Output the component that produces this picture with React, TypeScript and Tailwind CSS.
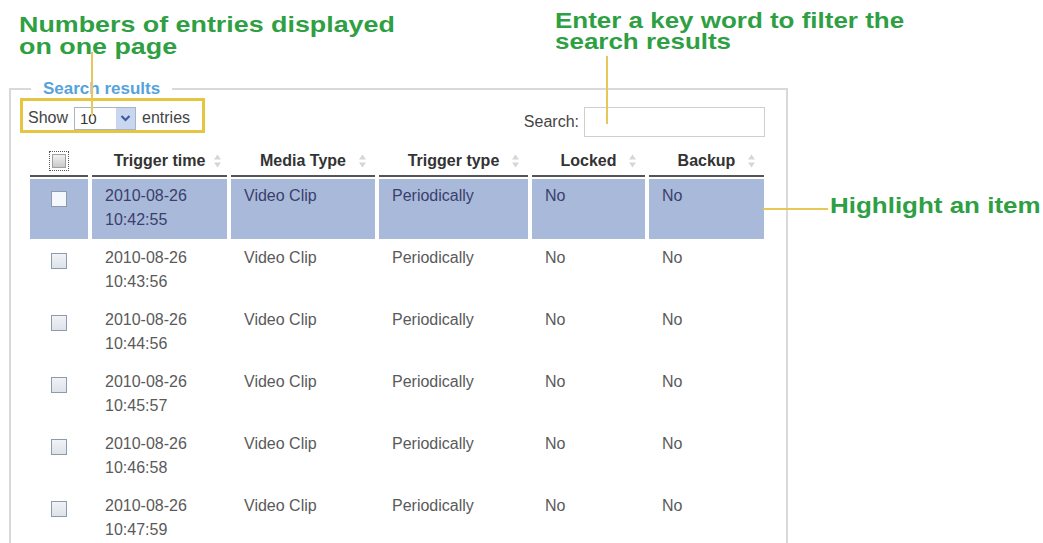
import React from "react";

const rows = [
  ["2010-08-26", "10:42:55"],
  ["2010-08-26", "10:43:56"],
  ["2010-08-26", "10:44:56"],
  ["2010-08-26", "10:45:57"],
  ["2010-08-26", "10:46:58"],
  ["2010-08-26", "10:47:59"],
];

function SortIcon({ right }: { right: string }) {
  return (
    <svg
      className={`absolute top-1/2 -translate-y-1/2 ${right}`}
      width="9"
      height="15"
      viewBox="0 0 9 15"
    >
      <path d="M4.5 1 L8 6 H1 Z" fill="#d6d6d6" />
      <path d="M4.5 14 L8 9 H1 Z" fill="#d6d6d6" />
    </svg>
  );
}

function Check({ light }: { light?: boolean }) {
  return (
    <div
      className={`w-[16px] h-[16px] border border-[#8d9aae] ${
        light ? "bg-[#f4f7fb]" : "bg-gradient-to-b from-[#f0f3f7] to-[#dde3ea]"
      }`}
    />
  );
}

const headers: { label: string; right: string }[] = [
  { label: "Trigger time", right: "right-[5px]" },
  { label: "Media Type", right: "right-[8px]" },
  { label: "Trigger type", right: "right-[8px]" },
  { label: "Locked", right: "right-[8px]" },
  { label: "Backup", right: "right-[8px]" },
];

export default function App() {
  return (
    <div className="relative w-[1043px] h-[543px] overflow-hidden bg-white font-['Liberation_Sans',Arial,sans-serif]">
      {/* Annotation headings */}
      <div className="flex items-start">
        <div className="w-[555px] pl-[19px] mt-[14px]">
          <div className="origin-left scale-x-[1.22] whitespace-nowrap font-bold text-[22px] leading-[22px] text-[#2ea043]">
            Numbers of entries displayed
            <br />
            on one page
          </div>
        </div>
        <div className="mt-[10px]">
          <div className="origin-left scale-x-[1.18] whitespace-nowrap font-bold text-[22px] leading-[21px] text-[#2ea043]">
            Enter a key word to filter the
            <br />
            search results
          </div>
        </div>
      </div>

      <div className="flex items-start mt-[21px]">
        <fieldset className="ml-[9px] w-[779px] h-[520px] border-2 border-[#d9d9d9] p-0">
          <legend className="ml-[20px] px-[12px] text-[17px] leading-[20px] font-bold text-[#56a3dc]">
            Search results
          </legend>

          {/* Controls row */}
          <div className="flex items-start justify-between mt-[-1px] pl-[9px] pr-[21px]">
            <div className="flex items-center w-[185px] h-[35px] border-[3px] border-[#e6c540] pl-[5px] pt-[5px] text-[16px] text-[#444]">
              <span>Show</span>
              <div className="ml-[6px] flex items-stretch w-[62px] h-[23px] border border-[#a9b4c4] bg-white">
                <span className="flex-1 pl-[5px] text-[15px] leading-[21px] text-[#333]">
                  10
                </span>
                <span className="w-[19px] flex items-center justify-center bg-[#c9d6f0]">
                  <svg width="11" height="8" viewBox="0 0 11 8">
                    <path
                      d="M1.5 2 L5.5 6 L9.5 2"
                      fill="none"
                      stroke="#3b5ba5"
                      strokeWidth="2.2"
                    />
                  </svg>
                </span>
              </div>
              <span className="ml-[6px]">entries</span>
            </div>
            <div className="flex items-center mt-[9px] text-[16px] text-[#444]">
              <span>Search:</span>
              <div className="ml-[5px] w-[181px] h-[30px] border border-[#cfcfcf] bg-white" />
            </div>
          </div>

          {/* Table */}
          <div className="ml-[19px] mt-[9px] grid grid-cols-[58px_135px_144px_149px_113px_115px] gap-x-[4px] gap-y-[2px]">
            {/* header */}
            <div className="h-[31px] border-b-2 border-[#555] flex items-center justify-center">
              <div className="w-[20px] h-[20px] border border-dotted border-[#555] p-[2px]">
                <div className="w-full h-full border border-[#a0a0a0] bg-gradient-to-b from-[#f2f2f2] to-[#c9c9c9]" />
              </div>
            </div>
            {headers.map((h) => (
              <div
                key={h.label}
                className="relative h-[31px] border-b-2 border-[#555] flex items-center justify-center font-bold text-[16px] text-[#333]"
              >
                {h.label}
                <SortIcon right={h.right} />
              </div>
            ))}

            {rows.map((r, i) => {
              const hi = i === 0;
              const cell = `h-[60px] pl-[13px] pt-[5px] text-[16px] leading-[24px] ${
                hi ? "bg-[#a9b9da] text-[#3a3f6c]" : "text-[#5a5a5a]"
              }`;
              return (
                <React.Fragment key={r[1]}>
                  <div
                    className={`h-[60px] flex justify-center pt-[12px] ${
                      hi ? "bg-[#a9b9da]" : ""
                    }`}
                  >
                    <Check light={hi} />
                  </div>
                  <div className={cell}>
                    {r[0]}
                    <br />
                    {r[1]}
                  </div>
                  <div className={cell}>Video Clip</div>
                  <div className={cell}>Periodically</div>
                  <div className={cell}>No</div>
                  <div className={cell}>No</div>
                </React.Fragment>
              );
            })}
          </div>
        </fieldset>

        <div className="ml-[42px] mt-[116px]">
          <div className="origin-left scale-x-[1.18] whitespace-nowrap font-bold text-[22px] leading-[22px] text-[#2ea043]">
            Highlight an item
          </div>
        </div>
      </div>

      {/* Annotation leader lines */}
      <div className="absolute left-[91px] top-[52px] w-[2px] h-[64px] bg-[#e6c85a]" />
      <div className="absolute left-[606px] top-[56px] w-[2px] h-[68px] bg-[#e6c85a]" />
      <div className="absolute left-[763px] top-[208px] w-[65px] h-[2px] bg-[#e6c85a]" />
    </div>
  );
}
